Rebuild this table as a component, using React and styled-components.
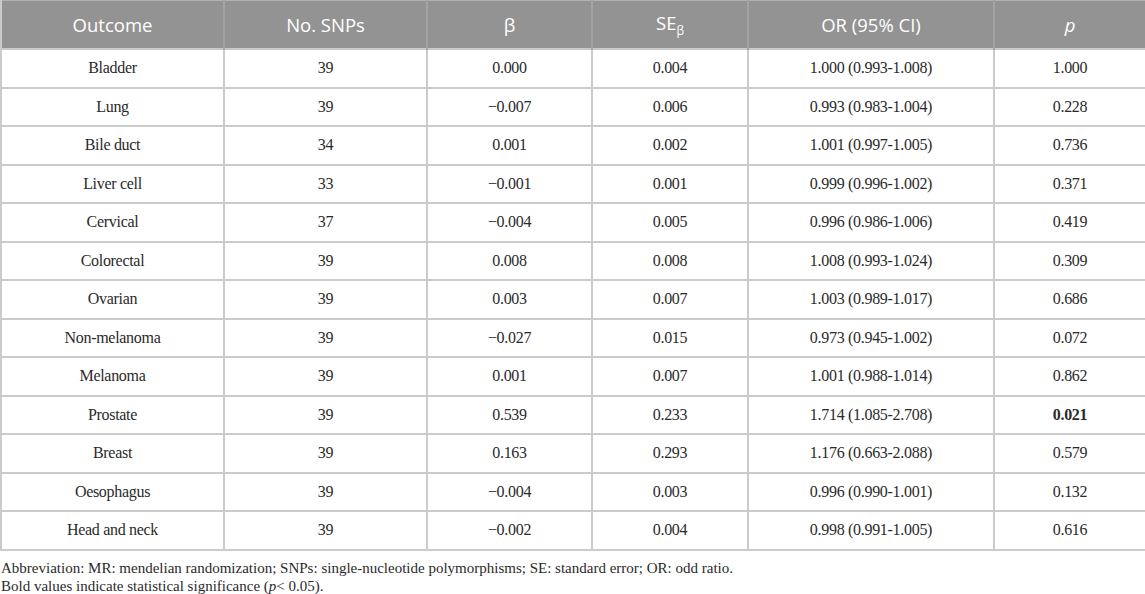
import React from "react";
import styled, { createGlobalStyle } from "styled-components";

const serif = `"Liberation Serif", "Times New Roman", serif`;

const Global = createGlobalStyle`
  html, body { margin: 0; padding: 0; background: #fff; }
  body { font-family: ${serif}; }
`;

const Page = styled.div`
  width: 1145px;
`;

const Table = styled.table`
  width: 1145px;
  border-collapse: collapse;
  table-layout: fixed;
  border: 2px solid #cbcbcb;
  border-top: none;
`;

const HeadCell = styled.th`
  background: #939393;
  color: #fff;
  font-family: "Open Sans", sans-serif;
  font-weight: 400;
  font-size: 18.5px;
  height: 47px;
  padding: 0;
  text-align: center;
  border-left: 2px solid #a3a3a3;
  border-top: 1px solid #b0b0b0;
  font-style: ${(p) => (p.$italic ? "italic" : "normal")};
  &:first-child { border-left: none; }
`;

const Cell = styled.td`
  border: 2px solid #cbcbcb;
  height: 36.5px;
  padding: 0;
  text-align: center;
  font-family: ${serif};
  font-size: 16px;
  letter-spacing: -0.3px;
  color: #2a2a2a;
  font-weight: ${(p) => (p.$bold ? 700 : 400)};
`;

const Sub = styled.sub`
  font-size: 12px;
  vertical-align: -5px;
`;

const Footer = styled.div`
  padding: 8px 0 0 1px;
  font-family: ${serif};
  font-size: 15px;
  line-height: 18px;
  color: #2a2a2a;
`;

const rows = [
  ["Bladder", "39", "0.000", "0.004", "1.000 (0.993-1.008)", "1.000"],
  ["Lung", "39", "\u22120.007", "0.006", "0.993 (0.983-1.004)", "0.228"],
  ["Bile duct", "34", "0.001", "0.002", "1.001 (0.997-1.005)", "0.736"],
  ["Liver cell", "33", "\u22120.001", "0.001", "0.999 (0.996-1.002)", "0.371"],
  ["Cervical", "37", "\u22120.004", "0.005", "0.996 (0.986-1.006)", "0.419"],
  ["Colorectal", "39", "0.008", "0.008", "1.008 (0.993-1.024)", "0.309"],
  ["Ovarian", "39", "0.003", "0.007", "1.003 (0.989-1.017)", "0.686"],
  ["Non-melanoma", "39", "\u22120.027", "0.015", "0.973 (0.945-1.002)", "0.072"],
  ["Melanoma", "39", "0.001", "0.007", "1.001 (0.988-1.014)", "0.862"],
  ["Prostate", "39", "0.539", "0.233", "1.714 (1.085-2.708)", "0.021", true],
  ["Breast", "39", "0.163", "0.293", "1.176 (0.663-2.088)", "0.579"],
  ["Oesophagus", "39", "\u22120.004", "0.003", "0.996 (0.990-1.001)", "0.132"],
  ["Head and neck", "39", "\u22120.002", "0.004", "0.998 (0.991-1.005)", "0.616"],
];

const widths = [223, 203, 165, 156, 246, 152];

export default function App() {
  return (
    <Page>
      <Global />
      <Table>
        <colgroup>
          {widths.map((w, i) => (
            <col key={i} style={{ width: w }} />
          ))}
        </colgroup>
        <thead>
          <tr>
            <HeadCell>Outcome</HeadCell>
            <HeadCell>No. SNPs</HeadCell>
            <HeadCell>β</HeadCell>
            <HeadCell>
              SE<Sub>β</Sub>
            </HeadCell>
            <HeadCell>OR (95% CI)</HeadCell>
            <HeadCell $italic>p</HeadCell>
          </tr>
        </thead>
        <tbody>
          {rows.map((r) => (
            <tr key={r[0]}>
              {r.slice(0, 6).map((c, i) => (
                <Cell key={i} $bold={i === 5 && r[6]}>
                  {c}
                </Cell>
              ))}
            </tr>
          ))}
        </tbody>
      </Table>
      <Footer>
        Abbreviation: MR: mendelian randomization; SNPs: single-nucleotide polymorphisms; SE: standard error; OR: odd ratio.
        <br />
        Bold values indicate statistical significance (<i>p</i>&lt; 0.05).
      </Footer>
    </Page>
  );
}
